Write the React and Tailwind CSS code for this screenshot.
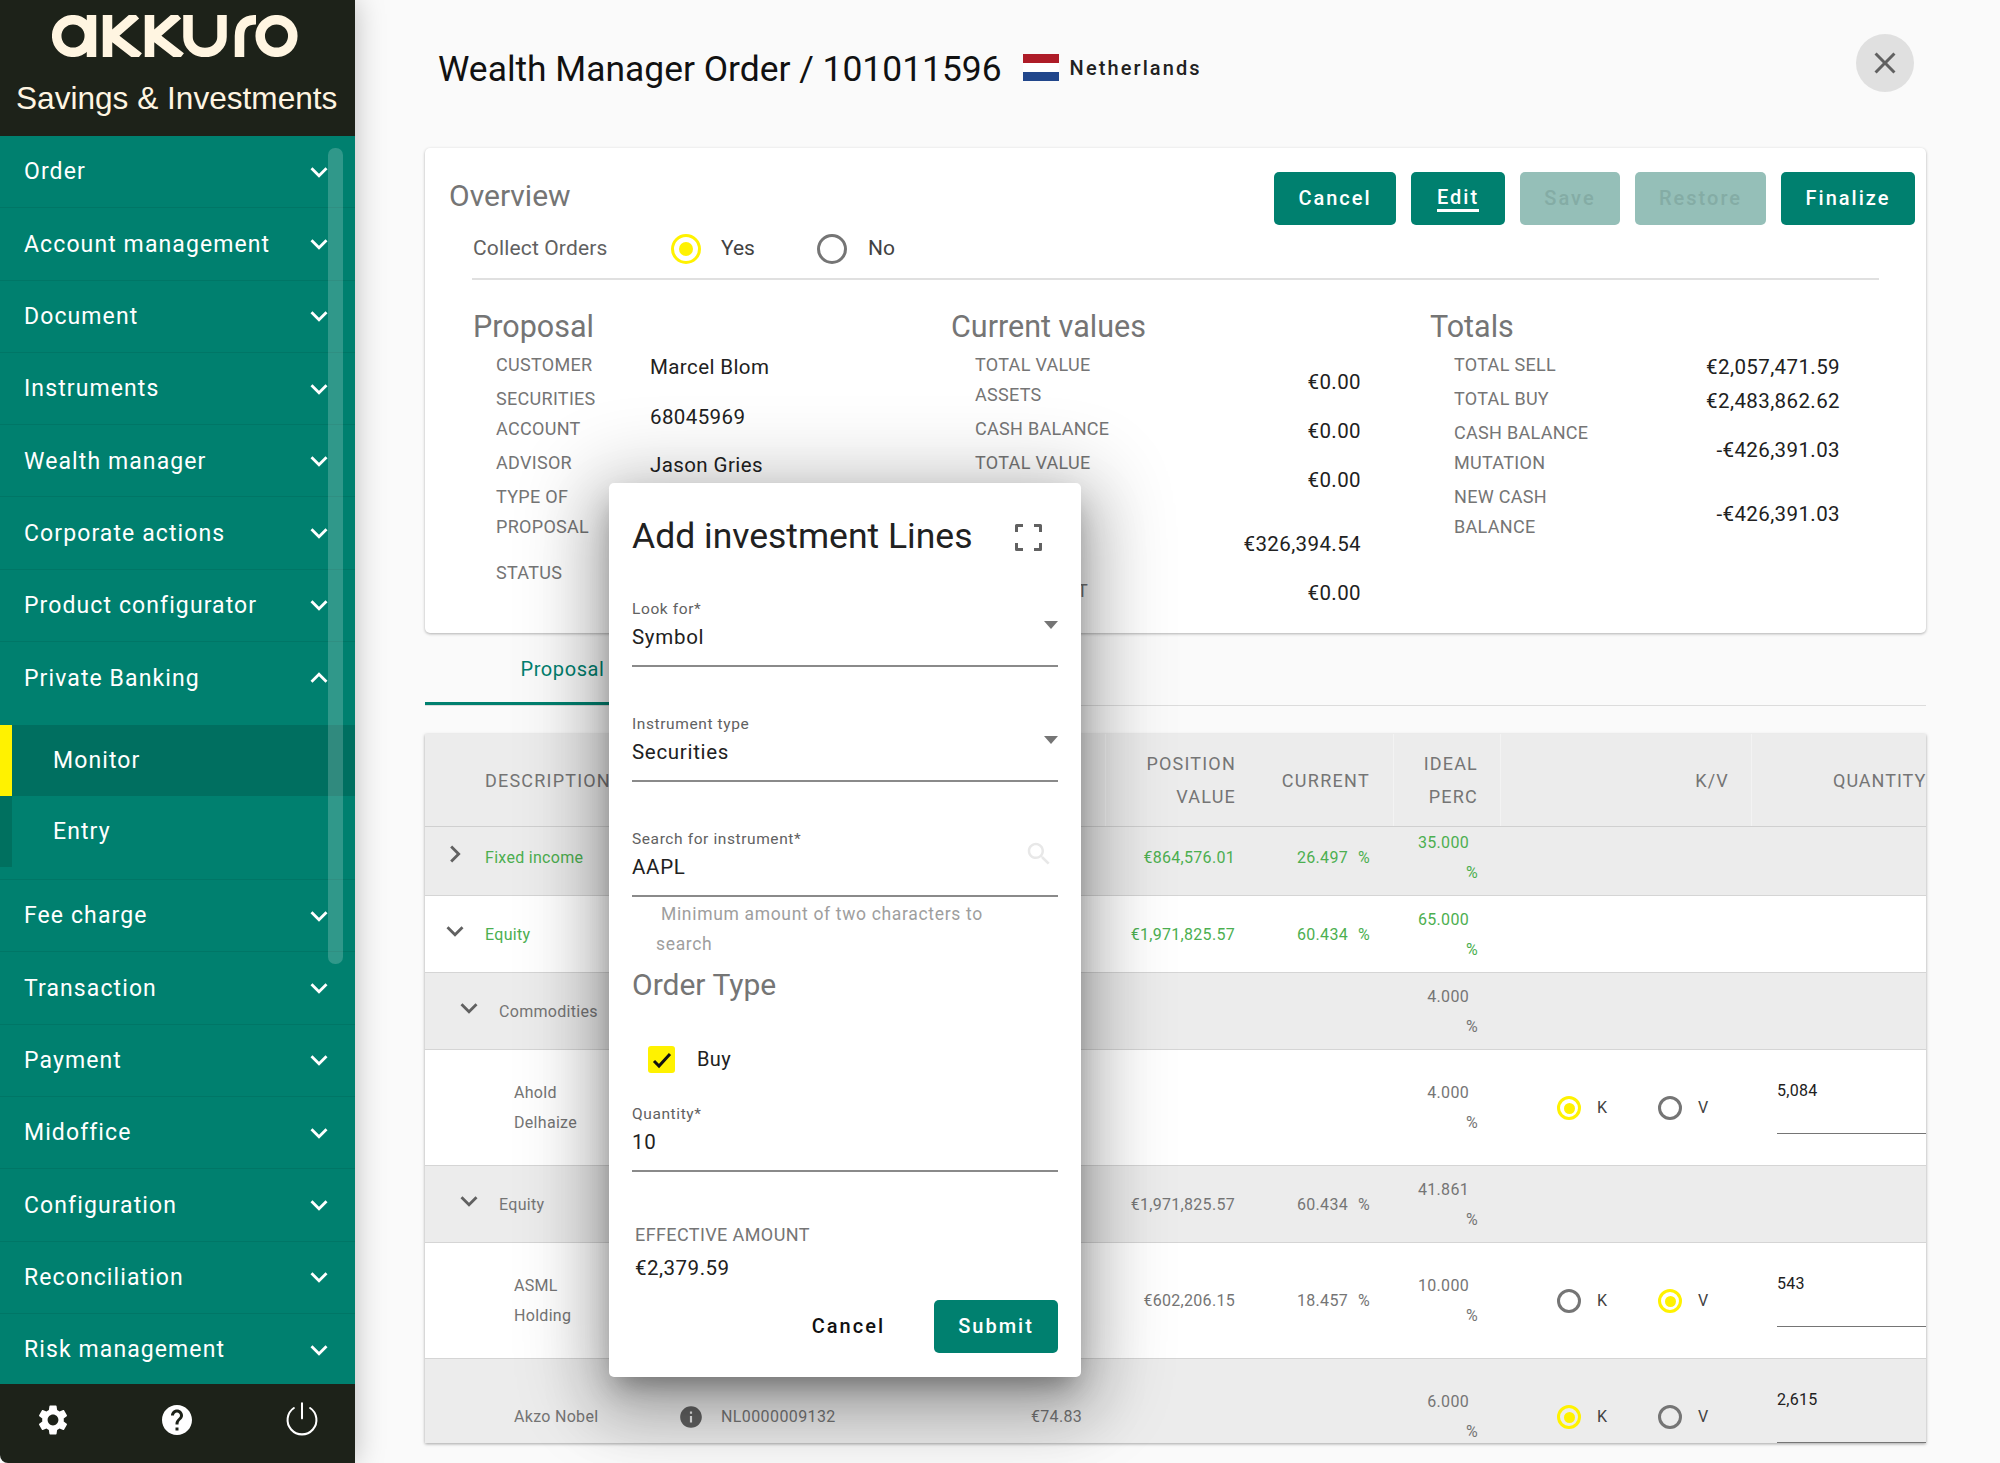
import React from "react";

const P = {
  more: "M16.59 8.59 12 13.17 7.41 8.59 6 10l6 6 6-6z",
  less: "M12 8l-6 6 1.41 1.41L12 10.83l4.59 4.58L18 14z",
  right: "M10 6 8.59 7.41 13.17 12l-4.58 4.59L10 18l6-6z",
  gear: "M19.14 12.94c.04-.3.06-.61.06-.94 0-.32-.02-.64-.07-.94l2.03-1.58c.18-.14.23-.41.12-.61l-1.92-3.32c-.12-.22-.37-.29-.59-.22l-2.39.96c-.5-.38-1.03-.7-1.62-.94l-.36-2.54c-.04-.24-.24-.41-.48-.41h-3.84c-.24 0-.43.17-.47.41l-.36 2.54c-.59.24-1.13.57-1.62.94l-2.39-.96c-.22-.08-.47 0-.59.22L2.74 8.87c-.12.21-.08.47.12.61l2.03 1.58c-.05.3-.09.63-.09.94s.02.64.07.94l-2.03 1.58c-.18.14-.23.41-.12.61l1.92 3.32c.12.22.37.29.59.22l2.39-.96c.5.38 1.03.7 1.62.94l.36 2.54c.05.24.24.41.48.41h3.84c.24 0 .44-.17.47-.41l.36-2.54c.59-.24 1.13-.56 1.62-.94l2.39.96c.22.08.47 0 .59-.22l1.92-3.32c.12-.22.07-.47-.12-.61l-2.01-1.58zM12 15.6c-1.98 0-3.6-1.62-3.6-3.6s1.62-3.6 3.6-3.6 3.6 1.62 3.6 3.6-1.62 3.6-3.6 3.6z",
  help: "M12 2C6.48 2 2 6.48 2 12s4.48 10 10 10 10-4.48 10-10S17.52 2 12 2zm1 17h-2v-2h2v2zm2.07-7.75l-.9.92C13.45 12.9 13 13.5 13 15h-2v-.5c0-1.1.45-2.1 1.17-2.83l1.24-1.26c.37-.36.59-.86.59-1.41 0-1.1-.9-2-2-2s-2 .9-2 2H8c0-2.21 1.79-4 4-4s4 1.79 4 4c0 .88-.36 1.68-.93 2.25z",
  info: "M12 2C6.48 2 2 6.48 2 12s4.48 10 10 10 10-4.48 10-10S17.52 2 12 2zm1 15h-2v-6h2v6zm0-8h-2V7h2v2z",
  search: "M15.5 14h-.79l-.28-.27C15.41 12.59 16 11.11 16 9.5 16 5.91 13.09 3 9.5 3S3 5.91 3 9.5 5.91 16 9.5 16c1.61 0 3.09-.59 4.23-1.57l.27.28v.79l5 4.99L20.49 19l-4.99-5zm-6 0C7.01 14 5 11.99 5 9.5S7.01 5 9.5 5 14 7.01 14 9.5 11.99 14 9.5 14z",
  close: "M19 6.41 17.59 5 12 10.59 6.41 5 5 6.41 10.59 12 5 17.59 6.41 19 12 13.41 17.59 19 19 17.59 13.41 12z",
};

function Icon({ d, className }) {
  return (
    <svg viewBox="0 0 24 24" className={className} fill="currentColor" aria-hidden="true">
      <path d={d} />
    </svg>
  );
}

function Logo() {
  return (
    <svg viewBox="52 15 248 42" className="ml-[52px] mt-[15px] h-[42px] w-[248px] text-[#fff5e1]" fill="none" stroke="currentColor" strokeWidth="9.5" aria-label="akkuro">
      <circle cx="73" cy="36" r="16.3" />
      <path d="M91.5 15V57" />
      <path d="M107.5 15V57M136 15 112 36 139 57" />
      <path d="M149.5 15V57M178 15 154 36 181 57" />
      <path d="M188 15V37A17 15.5 0 0 0 222 37V15" />
      <path d="M239.5 57V36Q239.5 19.7 256 19.7" />
      <circle cx="276.5" cy="36" r="16.3" />
    </svg>
  );
}

function NavItem({ label, open }) {
  return (
    <div className={"flex items-center justify-between pl-[24px] pr-[19px] text-[23px] tracking-[1.1px] text-white " + (open ? "h-[83px] pb-[11px]" : "h-[72.3px] border-b border-[#00000014]")}>
      <span className="pt-[2px]">{label}</span>
      <Icon d={open ? P.less : P.more} className="h-[34px] w-[34px]" />
    </div>
  );
}

function Sidebar() {
  const top = ["Order", "Account management", "Document", "Instruments", "Wealth manager", "Corporate actions", "Product configurator"];
  const bottom = ["Fee charge", "Transaction", "Payment", "Midoffice", "Configuration", "Reconciliation", "Risk management"];
  return (
    <aside className="relative z-10 flex h-[1463px] w-[355px] shrink-0 flex-col shadow-[0_0_28px_rgba(0,0,0,0.25)]">
      <header className="h-[136px] shrink-0 bg-[#1d2219]">
        <Logo />
        <div className="mt-[23px] pl-[16px] font-['Liberation_Sans',sans-serif] text-[31.6px] leading-[36px] text-[#fff5e1]">Savings &amp; Investments</div>
      </header>
      <nav className="relative h-[1248px] overflow-hidden bg-[#00806f]">
        {top.map((t) => <NavItem key={t} label={t} />)}
        <NavItem label="Private Banking" open />
        <div className="flex h-[71px] items-center border-l-[12px] border-[#fff200] bg-[#006f60] pl-[41px] pt-[2px] text-[23px] tracking-[1.1px] text-white">Monitor</div>
        <div className="flex h-[71px] items-center border-l-[12px] border-[#00705f] pl-[41px] pt-[2px] text-[23px] tracking-[1.1px] text-white">Entry</div>
        <div className="h-[13px] border-b border-[#00000014]" />
        {bottom.map((t) => <NavItem key={t} label={t} />)}
        <div className="absolute left-[328px] top-[12px] h-[816px] w-[15px] rounded-[7px] bg-[#ffffff30]" />
      </nav>
      <footer className="flex h-[79px] shrink-0 items-center justify-between rounded-bl-[8px] bg-[#1d2219] pl-[35px] pr-[34px] pb-[8px] text-white">
        <Icon d={P.gear} className="h-[36px] w-[36px]" />
        <Icon d={P.help} className="h-[36px] w-[36px]" />
        <svg viewBox="0 0 30 30" className="h-[38px] w-[38px] -translate-y-[1px]" fill="none" stroke="currentColor" strokeWidth="1.6" strokeLinecap="round" aria-hidden="true">
          <path d="M15 2.5V14.5M8.6 6.3a11.4 11.4 0 1 0 12.8 0" />
        </svg>
      </footer>
    </aside>
  );
}

function Radio({ on, large }) {
  const size = large ? "h-[30px] w-[30px]" : "h-[24px] w-[24px]";
  const ring = on ? "border-[#fff200]" : "border-[#757575]";
  return (
    <span className={"flex shrink-0 items-center justify-center rounded-full border-[3px] " + size + " " + ring}>
      {on && <span className={"rounded-full bg-[#fff200] " + (large ? "h-[14px] w-[14px]" : "h-[11px] w-[11px]")} />}
    </span>
  );
}

function Btn({ children, w, disabled, underline }) {
  return (
    <div className={"flex h-[53px] items-center justify-center rounded-[5px] pb-[1px] text-[20px] font-medium tracking-[2px] " + w + " " + (disabled ? "bg-[#95bfb8] text-[#84aca5]" : "bg-[#00806f] text-white")}>
      {underline ? <span className="border-b-[3px] border-white leading-[24px]">{children}</span> : children}
    </div>
  );
}

function Row({ label, value, h, pad }) {
  return (
    <div className={"flex w-[409px] items-center " + h}>
      <div className="w-[178px] shrink-0 pl-[24px] text-[18px] uppercase leading-[30px] tracking-[0.3px] text-[#757575]">{label}</div>
      <div className={"flex-1 text-[20.5px] tracking-[0.4px] text-[#212121] " + pad}>{value}</div>
    </div>
  );
}

function ValueRow({ label, value, h }) {
  return (
    <div className={"flex w-[410px] items-center justify-between " + h}>
      <div className="pl-[24px] text-[18px] uppercase leading-[30px] tracking-[0.3px] text-[#757575]">{label}</div>
      <div className="pt-[4px] text-[20.5px] tracking-[0.4px] text-[#212121]">{value}</div>
    </div>
  );
}

function Overview() {
  return (
    <section className="h-[485px] rounded-[5px] bg-white shadow-[0_1px_3px_rgba(0,0,0,0.3)]">
      <div className="flex items-start justify-between pl-[24px] pr-[11px] pt-[24px]">
        <h2 className="h-[46px] text-[30px] leading-[48px] text-[#757575]">Overview</h2>
        <div className="flex gap-[15px]">
          <Btn w="w-[122px]">Cancel</Btn>
          <Btn w="w-[94px]" underline>Edit</Btn>
          <Btn w="w-[100px]" disabled>Save</Btn>
          <Btn w="w-[131px]" disabled>Restore</Btn>
          <Btn w="w-[134px]">Finalize</Btn>
        </div>
      </div>
      <div className="mx-[47px] flex h-[55px] items-center border-b-2 border-[#e0e0e0] pb-[6px] text-[21px] text-[#616161]" >
        <span className="w-[199px] pl-[1px] tracking-[0.15px]">Collect Orders</span>
        <Radio on large />
        <span className="ml-[20px] w-[96px] text-[#424242]">Yes</span>
        <Radio large />
        <span className="ml-[21px] text-[#424242]">No</span>
      </div>
      <div className="grid grid-cols-[479px_479px_1fr] pl-[47px] pt-[27px]">
        <div>
          <h3 className="h-[43px] pl-[1px] text-[30.5px] leading-[40px] text-[#757575]">Proposal</h3>
          <div className="flex flex-col gap-[4px]">
            <Row label="Customer" value="Marcel Blom" h="h-[30px]" pad="pt-[4px]" />
            <Row label={<>Securities<br />Account</>} value="68045969" h="h-[60px]" pad="pt-[6px]" />
            <Row label="Advisor" value="Jason Gries" h="h-[30px]" pad="pt-[4px]" />
            <Row label={<>Type of<br />Proposal</>} value="" h="h-[60px]" pad="" />
            <div className="mt-[12px]"><Row label="Status" value="" h="h-[30px]" pad="" /></div>
          </div>
        </div>
        <div>
          <h3 className="h-[43px] text-[30.5px] leading-[40px] text-[#757575]">Current values</h3>
          <div className="flex flex-col gap-[4px]">
            <ValueRow label={<>Total value<br />Assets</>} value="€0.00" h="h-[60px]" />
            <ValueRow label="Cash balance" value="€0.00" h="h-[30px]" />
            <ValueRow label={<>Total value<br />Debts</>} value="€0.00" h="h-[60px]" />
            <ValueRow label={<>Total<br />Net</>} value="€326,394.54" h="h-[60px]" />
            <ValueRow label="Investment" value="€0.00" h="h-[30px]" />
          </div>
        </div>
        <div>
          <h3 className="h-[43px] text-[30.5px] leading-[40px] text-[#757575]">Totals</h3>
          <div className="flex flex-col gap-[4px]">
            <ValueRow label="Total sell" value="€2,057,471.59" h="h-[30px]" />
            <ValueRow label="Total buy" value="€2,483,862.62" h="h-[30px]" />
            <ValueRow label={<>Cash balance<br />Mutation</>} value="-€426,391.03" h="h-[60px]" />
            <ValueRow label={<>New cash<br />Balance</>} value="-€426,391.03" h="h-[60px]" />
          </div>
        </div>
      </div>
    </section>
  );
}

function Tabs() {
  return (
    <div className="h-[73px] border-b border-[#dcdcdc]">
      <div className="flex h-[72px] w-[275px] items-center justify-center border-b-[3px] border-[#00806f] pt-[2px] text-[20px] tracking-[0.6px] text-[#00806f]">Proposal</div>
    </div>
  );
}

const cols = "grid grid-cols-[255px_260px_166px_152px_136px_107px_251px_174px]";

function Head({ children, border }) {
  return <div className={"flex items-center justify-end pr-[22px] text-right text-[18px] leading-[33px] tracking-[1.2px] text-[#757575] " + (border ? "border-r border-[#f3f3f3]" : "")}>{children}</div>;
}

function TableHead() {
  return (
    <div className={cols + " h-[93px] border-b border-[#d0d0d0] bg-[#ececec]"}>
      <div className="flex items-center overflow-hidden whitespace-nowrap pl-[60px] text-[18px] tracking-[1.2px] text-[#757575]">DESCRIPTION</div>
      <div />
      <Head border />
      <Head>POSITION<br />VALUE</Head>
      <div className="flex items-center justify-end border-r border-[#f3f3f3] pr-[23px] text-[18px] tracking-[1.3px] text-[#757575]">CURRENT</div>
      <Head border>IDEAL<br />PERC</Head>
      <Head border>K/V</Head>
      <div className="flex items-center whitespace-nowrap pl-[81px] text-[18px] tracking-[1px] text-[#757575]">QUANTITY</div>
    </div>
  );
}

function KV({ k }) {
  return (
    <div className="flex items-center text-[16px] text-[#424242]">
      <span className="ml-[56px] w-[101px] flex items-center"><Radio on={k} /><span className="ml-[16px]">K</span></span>
      <span className="flex items-center"><Radio on={!k} /><span className="ml-[16px]">V</span></span>
    </div>
  );
}

function TRow({ h, gray, green, pb, level, chevron, name, isin, price, pos, cur, ideal, kv, qty }) {
  const tone = green ? "text-[#4caf50]" : "text-[#757575]";
  const pad = level === 0 ? "pl-[60px]" : level === 1 ? "pl-[74px]" : "pl-[89px]";
  const chevX = level === 0 ? "left-[13px]" : "left-[27px]";
  return (
    <div className={cols + " border-b border-[#d5d5d5] pt-[1px] text-[16px] tracking-[0.3px] " + h + " " + (gray ? "bg-[#ececec]" : "bg-white") + " " + tone + " " + (pb || "")}>
      <div className={"relative flex items-center leading-[30px] " + pad}>
        {chevron && <Icon d={chevron === "r" ? P.right : P.more} className={"absolute top-1/2 h-[34px] w-[34px] -translate-y-[21px] text-[#616161] " + chevX} />}
        <span>{name}</span>
      </div>
      <div className="flex items-center">
        {isin && <Icon d={P.info} className="-ml-[2px] h-[26px] w-[26px] text-[#616161]" />}
        {isin && <span className="ml-[17px] tracking-[0.4px]">{isin}</span>}
      </div>
      <div className="flex items-center justify-end pr-[24px]">{price}</div>
      <div className="flex items-center justify-end pr-[23px]">{pos}</div>
      <div className="flex items-center justify-end pr-[24px]">{cur && <><span>{cur}</span><span className="ml-[10px]">%</span></>}</div>
      <div className="flex flex-col items-end justify-center pr-[23px] leading-[30px]">
        <span className="pr-[9px]">{ideal}</span>
        <span>%</span>
      </div>
      <div className="flex items-center">{kv && <KV k={kv === "k"} />}</div>
      <div className="flex items-center">
        {qty && <div className="ml-[25px] mt-[-12px] h-[63px] w-full border-b border-[#757575] pt-[8px] text-[#212121]">{qty}</div>}
      </div>
    </div>
  );
}

function Table() {
  return (
    <div className="mt-[28px] h-[709px] overflow-hidden bg-white shadow-[0_1px_3px_rgba(0,0,0,0.35)]">
      <TableHead />
      <TRow h="h-[69px]" gray green pb="pb-[8px]" level={0} chevron="r" name="Fixed income" pos="€864,576.01" cur="26.497" ideal="35.000" />
      <TRow h="h-[77px]" green level={0} chevron="d" name="Equity" pos="€1,971,825.57" cur="60.434" ideal="65.000" />
      <TRow h="h-[77px]" gray level={1} chevron="d" name="Commodities" ideal="4.000" />
      <TRow h="h-[116px]" level={2} name={<>Ahold<br />Delhaize</>} ideal="4.000" kv="k" qty="5,084" />
      <TRow h="h-[77px]" gray level={1} chevron="d" name="Equity" pos="€1,971,825.57" cur="60.434" ideal="41.861" />
      <TRow h="h-[116px]" level={2} name={<>ASML<br />Holding</>} pos="€602,206.15" cur="18.457" ideal="10.000" kv="v" qty="543" />
      <TRow h="h-[116px]" gray level={2} name="Akzo Nobel" isin="NL0000009132" price="€74.83" ideal="6.000" kv="k" qty="2,615" />
    </div>
  );
}

function Field({ label, value, arrow, search, className }) {
  return (
    <div className={"relative h-[70px] border-b-2 border-[#8a8a8a] " + (className || "")}>
      <div className="h-[24px] text-[15.5px] leading-[24px] tracking-[0.6px] text-[#616161]">{label}</div>
      <div className="h-[32px] text-[20.5px] leading-[32px] tracking-[0.7px] text-[#212121]">{value}</div>
      {arrow && <span className="absolute right-0 top-[24px] h-0 w-0 border-x-[7.5px] border-t-[8px] border-x-transparent border-t-[#757575]" />}
      {search && <Icon d={P.search} className="absolute right-[4px] top-[12px] h-[30px] w-[30px] text-[#e8e8e8]" />}
    </div>
  );
}

function Dialog() {
  return (
    <div className="absolute left-[254px] top-[483px] z-20 flex h-[894px] w-[472px] flex-col rounded-[5px] bg-white px-[23px] shadow-[0_14px_26px_-8px_rgba(0,0,0,0.35),0_30px_60px_10px_rgba(0,0,0,0.16),0_10px_80px_20px_rgba(0,0,0,0.2)]">
      <div className="flex h-[104px] shrink-0 items-center justify-between pr-[16px] pt-[4px]">
        <h2 className="text-[35.5px] text-[#212121]">Add investment Lines</h2>
        <svg viewBox="0 0 27 27" className="h-[27px] w-[27px] text-[#616161]" fill="none" stroke="currentColor" strokeWidth="3" strokeLinejoin="round" aria-hidden="true">
          <path d="M1.5 8V1.5H8M19 1.5H25.5V8M25.5 19V25.5H19M8 25.5H1.5V19" />
        </svg>
      </div>
      <div className="mt-[10px]">
        <Field label="Look for*" value="Symbol" arrow />
        <Field className="mt-[45px]" label="Instrument type" value="Securities" arrow />
        <Field className="mt-[45px]" label="Search for instrument*" value="AAPL" search />
      </div>
      <p className="mt-[2px] pl-[24px] indent-[5px] text-[17.5px] leading-[30px] tracking-[0.67px] text-[#9e9e9e]">Minimum amount of two characters to<br />search</p>
      <h3 className="mt-[6px] h-[40px] text-[30px] leading-[40px] text-[#757575]">Order Type</h3>
      <div className="mt-[41px] flex h-[27px] items-center pl-[16px]">
        <span className="flex h-[27px] w-[27px] items-center justify-center rounded-[3px] bg-[#fff200]">
          <svg viewBox="0 0 24 24" className="h-[24px] w-[24px]" fill="none" stroke="#111" strokeWidth="3" aria-hidden="true"><path d="M4 13l5 5L20 6" /></svg>
        </span>
        <span className="ml-[22px] pb-[2px] text-[20px] tracking-[0.4px] text-[#212121]">Buy</span>
      </div>
      <Field className="mt-[29px]" label="Quantity*" value="10" />
      <div className="mt-[48px] h-[30px] pl-[3px] text-[18px] leading-[30px] tracking-[0.4px] text-[#757575]">EFFECTIVE AMOUNT</div>
      <div className="mt-[3px] h-[30px] pl-[3px] text-[20.5px] leading-[30px] tracking-[0.5px] text-[#212121]">€2,379.59</div>
      <div className="mt-[17px] flex items-center justify-end">
        <span className="mr-[49px] pb-[1px] text-[20px] font-medium tracking-[2px] text-[#111]">Cancel</span>
        <div className="flex h-[53px] w-[124px] items-center justify-center rounded-[5px] bg-[#00806f] pb-[1px] text-[20px] font-medium tracking-[2px] text-white">Submit</div>
      </div>
    </div>
  );
}

function Flag() {
  return (
    <span className="flex h-[27px] w-[36px] flex-col">
      <span className="h-[9px] bg-[#ae1c28]" />
      <span className="h-[9px] bg-white" />
      <span className="h-[9px] bg-[#21468b]" />
    </span>
  );
}

export default function App() {
  return (
    <div className="flex h-[1463px] w-[2000px] overflow-hidden bg-[#fafafa] font-['Roboto',sans-serif]">
      <Sidebar />
      <main className="relative flex-1 pl-[70px] pr-[74px]">
        <div className="flex h-[148px] items-start pl-[13px] pt-[48px]">
          <h1 className="text-[35.4px] leading-[43px] text-[#111]">Wealth Manager Order / 101011596</h1>
          <span className="ml-[21px] mt-[6px]"><Flag /></span>
          <span className="ml-[11px] mt-[5px] text-[20px] font-medium tracking-[2.1px] text-[#212121]">Netherlands</span>
          <div className="ml-auto mr-[12px] -mt-[14px] flex h-[58px] w-[58px] items-center justify-center rounded-full bg-[#e0e0e0]">
            <Icon d={P.close} className="h-[36px] w-[36px] text-[#616161]" />
          </div>
        </div>
        <Overview />
        <Tabs />
        <Table />
        <Dialog />
      </main>
    </div>
  );
}
